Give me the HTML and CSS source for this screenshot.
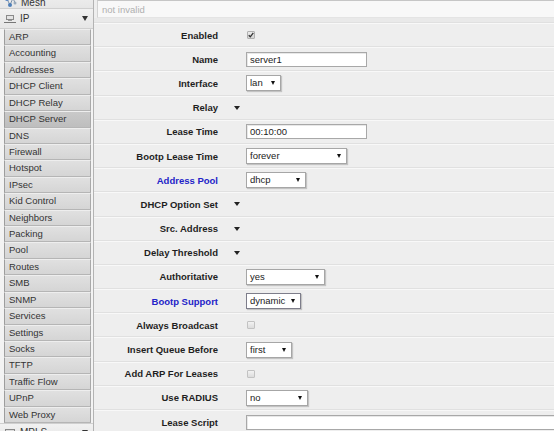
FILE: index.html
```html
<!DOCTYPE html>
<html>
<head>
<meta charset="utf-8">
<link rel="stylesheet" href="styles.css">
</head>
<body>
<div class="app">
  <aside class="side">
    <div class="top-item mesh">
      <svg class="ico" width="13" height="12" viewBox="0 0 13 12"><path d="M3 3L9 2M3 3L6 9M9 2L6 9M9 2L11 7" stroke="#7a8fa8" stroke-width="1" fill="none"/><circle cx="3" cy="3" r="2" fill="#5a86c0"/><circle cx="9" cy="2" r="1.8" fill="#8aa6c8"/><circle cx="6" cy="9" r="2" fill="#4f7fb8"/><circle cx="11" cy="7" r="1.5" fill="#9ab"/></svg>
      <span>Mesh</span>
    </div>
    <div class="top-item ip">
      <svg class="ico" width="12" height="10" viewBox="0 0 12 10"><rect x="2.5" y="1.5" width="7" height="4" fill="#e4e4e4" stroke="#8a8a8a"/><path d="M0 8.5H12" stroke="#777" stroke-width="1"/><path d="M4 6.5H8" stroke="#999"/></svg>
      <span>IP</span>
      <span class="caret"></span>
    </div>
    <ul class="sub">
      <li>ARP</li>
      <li>Accounting</li>
      <li>Addresses</li>
      <li>DHCP Client</li>
      <li>DHCP Relay</li>
      <li class="active">DHCP Server</li>
      <li>DNS</li>
      <li>Firewall</li>
      <li>Hotspot</li>
      <li>IPsec</li>
      <li>Kid Control</li>
      <li>Neighbors</li>
      <li>Packing</li>
      <li>Pool</li>
      <li>Routes</li>
      <li>SMB</li>
      <li>SNMP</li>
      <li>Services</li>
      <li>Settings</li>
      <li>Socks</li>
      <li>TFTP</li>
      <li>Traffic Flow</li>
      <li>UPnP</li>
      <li>Web Proxy</li>
    </ul>
    <div class="top-item mpls">
      <svg class="ico" width="12" height="10" viewBox="0 0 12 10"><rect x="1.5" y="2.5" width="9" height="5" fill="#ddd" stroke="#888"/></svg>
      <span>MPLS</span>
      <span class="caret"></span>
    </div>
  </aside>
  <main class="main">
    <div class="filter">not invalid</div>
    <div class="band"></div>
    <div class="form">
      <div class="row"><div class="label">Enabled</div><div class="field"><span class="check on"><svg width="6" height="6" viewBox="0 0 6 6"><path d="M0.7 3.2L2.3 4.8L5.3 0.8" stroke="#333" stroke-width="1.3" fill="none"/></svg></span></div></div>
      <div class="row"><div class="label">Name</div><div class="field"><span class="input w120">server1</span></div></div>
      <div class="row"><div class="label">Interface</div><div class="field"><span class="select w35">lan<i class="arr"></i></span></div></div>
      <div class="row"><div class="label">Relay</div><div class="field"><span class="toggle"></span></div></div>
      <div class="row"><div class="label">Lease Time</div><div class="field"><span class="input w120">00:10:00</span></div></div>
      <div class="row"><div class="label">Bootp Lease Time</div><div class="field"><span class="select w101">forever<i class="arr"></i></span></div></div>
      <div class="row"><div class="label blue">Address Pool</div><div class="field"><span class="select w60">dhcp<i class="arr"></i></span></div></div>
      <div class="row"><div class="label">DHCP Option Set</div><div class="field"><span class="toggle"></span></div></div>
      <div class="row"><div class="label">Src. Address</div><div class="field"><span class="toggle"></span></div></div>
      <div class="row"><div class="label">Delay Threshold</div><div class="field"><span class="toggle"></span></div></div>
      <div class="row"><div class="label">Authoritative</div><div class="field"><span class="select w79">yes<i class="arr"></i></span></div></div>
      <div class="row"><div class="label blue">Bootp Support</div><div class="field"><span class="select w55 dark">dynamic<i class="arr"></i></span></div></div>
      <div class="row"><div class="label">Always Broadcast</div><div class="field"><span class="check"></span></div></div>
      <div class="row"><div class="label">Insert Queue Before</div><div class="field"><span class="select w46">first<i class="arr"></i></span></div></div>
      <div class="row"><div class="label">Add ARP For Leases</div><div class="field"><span class="check"></span></div></div>
      <div class="row"><div class="label">Use RADIUS</div><div class="field"><span class="select w62">no<i class="arr"></i></span></div></div>
      <div class="row"><div class="label">Lease Script</div><div class="field"><span class="input wide"></span></div></div>
    </div>
  </main>
</div>
</body>
</html>
```

FILE: styles.css
```css
* { box-sizing: border-box; }
html, body { margin: 0; padding: 0; }
body {
  font-family: "Liberation Sans", Arial, sans-serif;
  font-size: 9.5px;
  color: #222;
  background: #eeeeee;
  overflow: hidden;
  width: 554px;
  height: 431px;
}
.app { display: flex; align-items: flex-start; height: 431px; overflow: hidden; }

/* sidebar */
.side {
  width: 94px;
  flex: none;
  margin-top: -9px;
  background: #f3f3f3;
  border-right: 1px solid #b3b3b3;
  color: #333;
}
.top-item {
  display: flex;
  align-items: center;
  gap: 4px;
  padding-left: 4px;
  background: linear-gradient(#f1f1f1, #e6e6e6);
  border-bottom: 1px solid #cfcfcf;
  font-size: 10px;
}
.top-item.mesh { height: 18px; padding-top: 5px; }
.top-item.ip { height: 20px; }
.top-item.mpls { height: 18px; border-top: 1px solid #cfcfcf; }
.ico { flex: none; }
.caret {
  margin-left: auto;
  margin-right: 5px;
  width: 0; height: 0;
  border-left: 3px solid transparent;
  border-right: 3px solid transparent;
  border-top: 5px solid #333;
}
.sub {
  list-style: none;
  margin: 0;
  padding: 0 2px 0 4px;
}
.sub li {
  height: 16.43px;
  line-height: 14.4px;
  padding-left: 4px;
  background: linear-gradient(#e0e0e0, #d5d5d5);
  border: 1px solid;
  border-color: #eeeeee #a9a9a9 #b5b5b5 #9d9d9d;
  white-space: nowrap;
}
.sub li.active { background: linear-gradient(#c9c9c9, #bebebe); }

/* main */
.main { flex: 1; min-width: 0; }
.filter {
  height: 18px;
  margin-left: 3px;
  padding: 3px 0 0 4px;
  background: #f8f8f8;
  border-top: 1px solid #c6c6c6;
  border-left: 1px solid #d2d2d2;
  border-bottom: 1px solid #e4e4e4;
  color: #b0b0b0;
}
.band {
  height: 5px;
  background: #e9e9e9;
  border-bottom: 1px solid #e0e0e0;
}
.row {
  display: grid;
  grid-template-columns: 124px 1fr;
  align-items: center;
  height: 24.19px;
  border-top: 1px solid #f8f8f8;
  border-bottom: 1px solid #e0e0e0;
}
.label { text-align: right; font-weight: bold; color: #1e1e1e; white-space: nowrap; }
.label.blue { color: #2323c8; }
.field { padding-left: 28px; display: flex; align-items: center; }

.input {
  display: block;
  height: 15px;
  padding: 1px 3px 0;
  background: #fff;
  border: 1px solid #a8a8a8;
  box-shadow: inset 1px 1px 0 #e8e8e8;
  line-height: 12px;
}
.w120 { width: 121px; }
.wide { width: 320px; }

.select {
  position: relative;
  display: block;
  height: 16px;
  padding: 0 3px;
  line-height: 14px;
  background: #fff;
  border: 1px solid #a6a6a6;
  box-shadow: 1px 1px 1px rgba(0,0,0,0.18);
}
.select.dark { border-color: #7d7d8a; }
.arr {
  position: absolute;
  right: 5px;
  top: 5px;
  width: 0; height: 0;
  border-left: 2.5px solid transparent;
  border-right: 2.5px solid transparent;
  border-top: 4px solid #111;
}
.w35 { width: 35px; }
.w101 { width: 101px; }
.w60 { width: 60px; }
.w79 { width: 79px; }
.w55 { width: 55px; }
.w46 { width: 46px; }
.w62 { width: 62px; }

.toggle {
  margin-left: -12px;
  width: 0; height: 0;
  border-left: 3.5px solid transparent;
  border-right: 3.5px solid transparent;
  border-top: 4px solid #222;
}
.check {
  display: flex;
  align-items: center;
  justify-content: center;
  margin-left: 1px;
  width: 8px;
  height: 8px;
  background: linear-gradient(#f2f2f2, #dcdcdc);
  border: 1px solid #c2c2c2;
  border-radius: 1px;
}
.check.on { background: linear-gradient(#eaeaea, #d4d4d4); border-color: #b0b0b0; }
```
